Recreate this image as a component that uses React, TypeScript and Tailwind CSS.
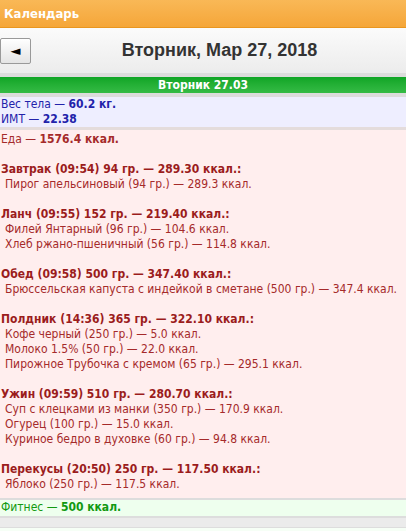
import React from "react";

type Meal = { title: string; items: string[] };

const meals: Meal[] = [
  { title: "Завтрак (09:54) 94 гр. — 289.30 ккал.:", items: ["Пирог апельсиновый (94 гр.) — 289.3 ккал."] },
  { title: "Ланч (09:55) 152 гр. — 219.40 ккал.:", items: ["Филей Янтарный (96 гр.) — 104.6 ккал.", "Хлеб ржано-пшеничный (56 гр.) — 114.8 ккал."] },
  { title: "Обед (09:58) 500 гр. — 347.40 ккал.:", items: ["Брюссельская капуста с индейкой в сметане (500 гр.) — 347.4 ккал."] },
  { title: "Полдник (14:36) 365 гр. — 322.10 ккал.:", items: ["Кофе черный (250 гр.) — 5.0 ккал.", "Молоко 1.5% (50 гр.) — 22.0 ккал.", "Пирожное Трубочка с кремом (65 гр.) — 295.1 ккал."] },
  { title: "Ужин (09:59) 510 гр. — 280.70 ккал.:", items: ["Суп с клецками из манки (350 гр.) — 170.9 ккал.", "Огурец (100 гр.) — 15.0 ккал.", "Куриное бедро в духовке (60 гр.) — 94.8 ккал."] },
  { title: "Перекусы (20:50) 250 гр. — 117.50 ккал.:", items: ["Яблоко (250 гр.) — 117.5 ккал."] },
];

export default function App() {
  return (
    <div className="w-[406px] h-[531px] overflow-hidden bg-[#eeeeee] text-[12px] leading-[15px]" style={{ fontFamily: '"DejaVu Sans Condensed", "DejaVu Sans", sans-serif' }}>
      <div className="h-[28px] bg-gradient-to-b from-[#f9b856] to-[#f5a638] border-b border-[#e9961f] flex items-center px-[4px] text-white text-[13px] font-bold">
        Календарь
      </div>
      <div className="h-[45px] bg-gradient-to-b from-[#fbfbfb] to-[#ececec] flex items-center">
        <button className="w-[31px] h-[26px] border border-[#999] rounded-[2px] bg-gradient-to-b from-[#ffffff] to-[#e4e4e4] flex items-center justify-center text-[13px] text-black" style={{ fontFamily: '"DejaVu Sans", sans-serif' }}>
          ◄
        </button>
        <div className="flex-1 text-center text-[18px] font-bold text-[#333] pl-[2px]" style={{ fontFamily: '"Liberation Sans", Arial, sans-serif' }}>
          Вторник, Мар 27, 2018
        </div>
      </div>
      <div className="h-[4px] bg-[#dcdcdc]" />
      <div className="h-[16px] bg-gradient-to-b from-[#0ea525] to-[#34bb45] text-white font-bold text-center leading-[16px]">
        Вторник 27.03
      </div>
      <div className="h-[4px] bg-[#dcdcdc]" />
      <div className="bg-[#eeeeff] text-[#2222aa] px-[1px] py-0 h-[30px]">
        <div>Вес тела — <b>60.2 кг.</b></div>
        <div>ИМТ — <b>22.38</b></div>
      </div>
      <div className="h-[3px] bg-[#e4dcdc]" />
      <div className="bg-[#ffeeee] text-[#a52a2a] px-[1px] pt-[2px] h-[368px]">
        <div>Еда — <b>1576.4 ккал.</b></div>
        {meals.map((m) => (
          <div key={m.title} className="mt-[15px]">
            <div className="font-bold text-[#9b1c1c]">{m.title}</div>
            {m.items.map((it) => (
              <div key={it} className="pl-[4px]">{it}</div>
            ))}
          </div>
        ))}
      </div>
      <div className="h-[2px] bg-[#dddddd]" />
      <div className="h-[16px] bg-[#eeffee] text-[#119911] px-[1px]">
        Фитнес — <b>500 ккал.</b>
      </div>
      <div className="h-[2px] bg-[#dddddd]" />
      <div className="h-[9px] bg-[#ebebeb]" />
      <div className="h-[1px] bg-[#dddddd]" />
      <div className="h-[4px] bg-[#f6fff6]" />
    </div>
  );
}
